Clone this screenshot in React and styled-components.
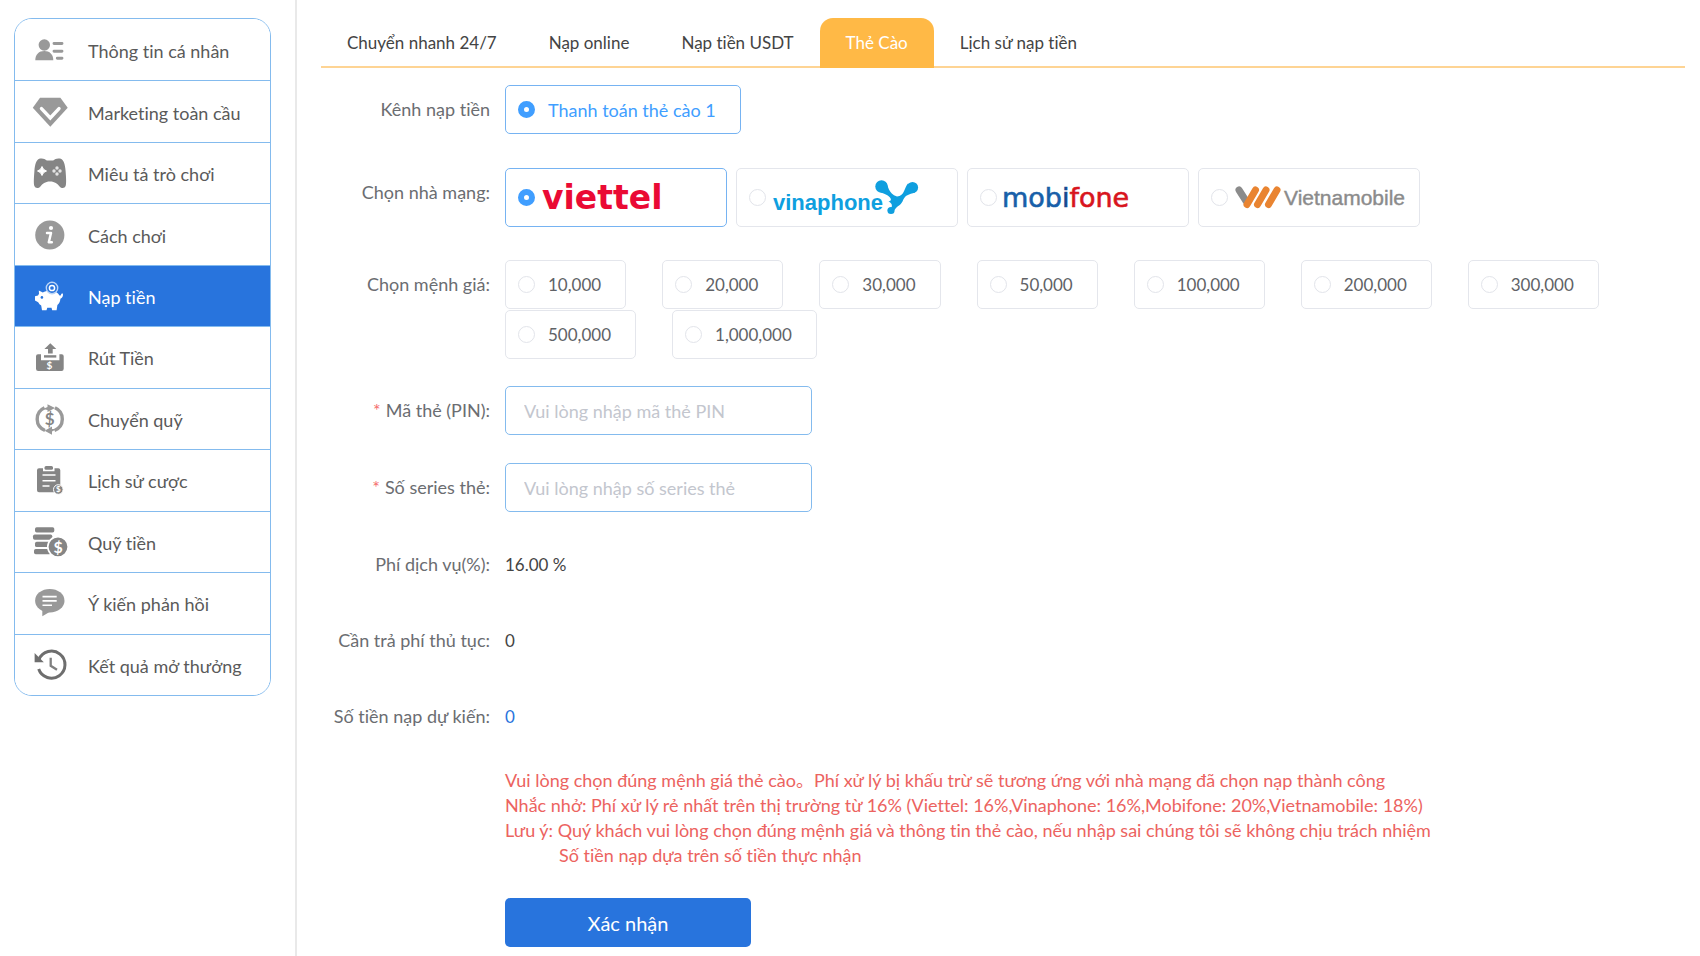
import React, { useState } from "react";
import styled, { createGlobalStyle } from "styled-components";

const GlobalStyle = createGlobalStyle`
  *, *::before, *::after { box-sizing: border-box; }
  body {
    margin: 0;
    background: #fff;
    color: #4b4b4b;
    font-family: Lato, "Noto Sans", "Noto Sans CJK SC", sans-serif;
    font-size: 18px;
    line-height: 24px;
    font-variant-ligatures: none;
  }
  button, input { font: inherit; font-variant-ligatures: none; }
`;

const Page = styled.div`
  display: flex;
  min-height: 100vh;
`;

const Sidebar = styled.aside`
  flex: 0 0 297px;
  padding: 18px 24px 18px 14px;
  border-right: 2px solid #e9e9e9;
`;

const Menu = styled.nav`
  display: grid;
  grid-auto-rows: 1fr;
  min-height: 678px;
  border: 1px solid #84bbee;
  border-radius: 18px;
  overflow: hidden;
`;

const MenuLink = styled.a`
  display: flex;
  align-items: center;
  gap: 20px;
  padding: 0 17px;
  color: ${(p) => (p.$active ? "#fff" : "#5a5a5a")};
  background: ${(p) => (p.$active ? "#2874dd" : "#fff")};
  text-decoration: none;
  white-space: nowrap;

  & + & { border-top: 1px solid #84bbee; }
`;

const MenuIcon = styled.svg`
  flex: none;
  width: 36px;
  height: 36px;
`;

const MenuText = styled.span`
  padding-top: 2px;
`;

const Main = styled.main`
  flex: 1;
  min-width: 0;
  padding: 18px 15px 8px 24px;
`;

const Tabs = styled.div`
  display: flex;
  height: 50px;
  border-bottom: 2px solid #fed494;
`;

const Tab = styled.button`
  height: 50px;
  padding: 0 26px;
  border: 0;
  border-radius: 13px 13px 0 0;
  background: ${(p) => (p.$active ? "#ffb946" : "transparent")};
  color: ${(p) => (p.$active ? "#fff" : "#444")};
  font-size: 17px;
  white-space: nowrap;
  cursor: pointer;
`;

const Form = styled.form`
  display: flex;
  flex-direction: column;
  gap: 27px;
  padding-top: 17px;
`;

const Row = styled.div`
  display: grid;
  grid-template-columns: 169px minmax(0, 1fr);
  column-gap: 15px;
  align-items: start;
  min-height: ${(p) => (p.$static ? 49 : 50)}px;
  margin-bottom: ${(p) => (p.$spaced ? 6 : 0)}px;
`;

const Label = styled.label`
  line-height: 49px;
  color: #6b6d71;
  text-align: right;
  white-space: nowrap;
`;

const Required = styled.span`
  color: #f56c6c;
  margin-right: 5px;
`;

const Options = styled.div`
  display: flex;
  flex-wrap: wrap;
  gap: 1px ${(p) => p.$gap}px;
`;

const Option = styled.label`
  display: flex;
  align-items: center;
  gap: ${(p) => (p.$logo ? 7 : 13)}px;
  width: ${(p) => (p.$logo ? "222px" : "auto")};
  height: ${(p) => (p.$logo ? 59 : 49)}px;
  padding: 0 ${(p) => (p.$logo ? 0 : 24)}px 0 12px;
  border: 1px solid ${(p) => (p.$checked ? "#76b3f2" : "#e4e6ec")};
  border-radius: 5px;
  color: ${(p) => (p.$checked ? "#409eff" : "#606266")};
  font-size: ${(p) => (p.$amount ? 17 : 18)}px;
  white-space: nowrap;
  cursor: pointer;
`;

const Radio = styled.input.attrs({ type: "radio" })`
  appearance: none;
  flex: none;
  width: 17px;
  height: 17px;
  margin: 0;
  border: 1px solid #e2e4ea;
  border-radius: 50%;
  background: #fff;

  &:checked { border: 6px solid #409eff; }
`;

const Logo = styled.svg`
  height: 40px;
  overflow: visible;
`;

const TextInput = styled.input`
  width: 307px;
  height: 49px;
  padding: 0 18px;
  border: 1px solid #84bbee;
  border-radius: 5px;
  background: #fff;
  color: #606266;
  outline: 0;

  &::placeholder { color: #c3c6ce; opacity: 1; }
`;

const Value = styled.output`
  line-height: 49px;
  font-size: 17px;
  color: ${(p) => (p.$accent ? "#2874dd" : "#444")};
`;

const Footer = styled.div`
  display: flex;
  flex-direction: column;
  align-items: flex-start;
  gap: 30px;
  margin-left: 184px;
`;

const Notice = styled.div`
  color: #ec6360;
  line-height: 25px;
`;

const NoticeLine = styled.p`
  margin: 0;
  padding-left: ${(p) => (p.$indent ? 54 : 0)}px;
`;

const Submit = styled.button`
  width: 246px;
  height: 49px;
  border: 0;
  border-radius: 5px;
  background: #2874dd;
  color: #fff;
  font-size: 20px;
  cursor: pointer;
`;

const Dollar = ({ x, y, size, fill }) => (
  <text x={x} y={y} fontSize={size} fill={fill} textAnchor="middle" fontWeight="700" fontFamily="Lato, sans-serif">$</text>
);

const G = "#999";
const D = "#858585";

const icons = {
  profile: (
    <>
      <circle cx="12.3" cy="13" r="5.7" fill={G} />
      <path d="M3.3 28.3c0-6 3.700-9.300 9-9.300s9 3.300 9 9.300z" fill={G} />
      <path d="M22 11.500h8M22 19.300h8M25.300 26.300h4.700" stroke={G} strokeWidth="2.900" strokeLinecap="round" />
    </>
  ),
  marketing: (
    <>
      <path d="M8 3.700h20.400l7.300 10-17.400 19L.8 13.700z" fill={G} />
      <path d="M9.500 14.600l8.800 9.400 8.700-9.400" fill="none" stroke="#fff" strokeWidth="3.400" strokeLinecap="round" />
    </>
  ),
  games: (
    <>
      <path d="M8 3.600c2.500-.6 5 .2 6.800 1.800h6.400C23 3.800 25.500 3 28 3.600c4 1 5 6 5.600 12.400.5 6.500.9 12.500 0 15-.8 2.300-4 2.700-6 .4-2.200-2.600-4.600-5-9.600-5s-7.400 2.400-9.600 5c-2 2.300-5.200 1.900-6-.4-.9-2.500-.5-8.500 0-15C3 9.600 4 4.600 8 3.600z" fill={D} />
      <path d="M10 11.500l1.600 2.900 2.900 1.600-2.900 1.600L10 20.500l-1.600-2.900L5.500 16l2.900-1.600z" fill="#fff" stroke="#fff" strokeLinejoin="round" />
      <g fill="#e4e4e4"><circle cx="25" cy="13" r="1.700" /><circle cx="25" cy="19" r="1.700" /><circle cx="22" cy="16" r="1.700" /><circle cx="28" cy="16" r="1.700" /></g>
    </>
  ),
  info: (
    <>
      <circle cx="17.800" cy="18" r="14.600" fill={G} />
      <circle cx="19" cy="11" r="2.100" fill="#fff" />
      <path d="M15 16h4l-2.200 9.200h3" fill="none" stroke="#fff" strokeWidth="2.500" strokeLinecap="round" strokeLinejoin="round" />
    </>
  ),
  deposit: (
    <>
      <path d="M7 15.800l-.2-3.300 4 2c2-1.200 4.200-1.700 7-1.700 5 0 8.200 1.700 9.700 4.700 1 .5 1.600-.2 1.800-1.700l1.700-.4c.2 2.800-.8 4.600-2.600 5.300-.1 2.500-1.100 4.600-3 6.200l-.8 5.400h-4.400l-.7-2.600h-4.200l-.8 2.600H10l-.8-4.700c-1.300-.9-2.300-2-3-3.400L3 22.600v-4.300l3-.8z" fill="#fff" />
      <circle cx="9.900" cy="19.400" r="1.300" fill="#2874dd" />
      <circle cx="20" cy="10" r="5.700" fill="#2874dd" stroke="#bcd5f6" strokeWidth="1.400" />
      <circle cx="20" cy="10" r="2.600" fill="none" stroke="#fff" strokeWidth="1.500" />
    </>
  ),
  withdraw: (
    <>
      <path d="M6 15.300h3v6h18.400v-6h2.300q2 0 2 2v12.500q0 2.200-2.200 2.200H6.200Q4 32 4 29.800V17.300q0-2 2-2z" fill={D} />
      <path d="M18.300 4.200l6 5.800h-3.600v4.500H16V10h-3.600z" fill={D} />
      <path d="M12 17.400h12.300" stroke={D} strokeWidth="2.400" />
      <Dollar x="17.400" y="30.300" size="10" fill="#fff" />
    </>
  ),
  transfer: (
    <>
      <path d="M12.500 6.800A12.300 12.300 0 0 0 13 29.500M23 6.800A12.300 12.300 0 0 1 22.500 29.500" fill="none" stroke={G} strokeWidth="3.400" />
      <path d="M11 8l4.500-2V3.200L23 7l-7.500 4V9zM24.500 28L20 30.500v3.300l-7.400-4 7.400-4.300V28z" fill={G} />
      <Dollar x="17.800" y="24" size="17" fill={D} />
    </>
  ),
  history: (
    <>
      <path d="M7 6.300h4v3h11.500v-3h3.800q2 0 2 2v15l-6.500 7H7q-2 0-2-2v-20q0-2 2-2z" fill={D} />
      <rect x="12.500" y="4" width="8.500" height="3.700" rx="1.500" fill={D} />
      <path d="M10.500 13h13M10.500 18.700h13M10.500 24h7" stroke="#fff" strokeWidth="1.600" />
      <circle cx="26.300" cy="27.500" r="4.800" fill={D} stroke="#fff" />
      <Dollar x="26.300" y="30.300" size="8" fill="#fff" />
    </>
  ),
  fund: (
    <>
      <g fill={D}>
        <rect x="3" y="3.200" width="19.300" height="5.300" rx="1.700" />
        <rect x="1" y="10.500" width="19.300" height="5.300" rx="1.700" />
        <rect x="3" y="17.800" width="16" height="5.300" rx="1.700" />
        <rect x="2" y="25" width="17" height="5.300" rx="1.700" />
      </g>
      <circle cx="26" cy="22.800" r="10.200" fill={D} stroke="#fff" strokeWidth="1.600" />
      <Dollar x="26.100" y="28.500" size="16" fill="#fff" />
    </>
  ),
  feedback: (
    <>
      <ellipse cx="17.800" cy="15.700" rx="14.700" ry="11.800" fill={G} />
      <path d="M10.300 23v8.200l8.500-5z" fill={G} />
      <path d="M10.500 11.600h14.200M10.500 15.900h14.200M10.500 20.200h9.500" stroke="#fff" strokeWidth="1.600" />
    </>
  ),
  results: (
    <>
      <path d="M7 12.500A13.500 13.500 0 1 1 6.700 22" fill="none" stroke="#6e6e6e" strokeWidth="3" />
      <path d="M2.600 6l9.200 9.300H2.600z" fill="#6e6e6e" />
      <path d="M18.700 10.800v8l6.300 4" fill="none" stroke="#808080" strokeWidth="2.300" />
    </>
  ),
};

const menu = [
  ["profile", "Thông tin cá nhân"],
  ["marketing", "Marketing toàn cầu"],
  ["games", "Miêu tả trò chơi"],
  ["info", "Cách chơi"],
  ["deposit", "Nạp tiền"],
  ["withdraw", "Rút Tiền"],
  ["transfer", "Chuyển quỹ"],
  ["history", "Lịch sử cược"],
  ["fund", "Quỹ tiền"],
  ["feedback", "Ý kiến phản hồi"],
  ["results", "Kết quả mở thưởng"],
];

const tabs = ["Chuyển nhanh 24/7", "Nạp online", "Nạp tiền USDT", "Thẻ Cào", "Lịch sử nạp tiền"];

const carriers = [
  {
    id: "viettel",
    art: (
      <Logo width="121" viewBox="0 0 121 40" role="img" aria-label="viettel">
        <text x="0" y="31" fontFamily="DejaVu Sans, sans-serif" fontWeight="700" fontSize="33" fill="#ea0a34">viettel</text>
      </Logo>
    ),
  },
  {
    id: "vinaphone",
    art: (
      <Logo width="148" viewBox="0 0 148 40" role="img" aria-label="vinaphone">
        <text x="0" y="32" fontFamily="Liberation Sans, sans-serif" fontWeight="700" fontSize="22" fill="#0f9fdf">vinaphone</text>
        <g fill="#0f9fdf">
          <circle cx="108.500" cy="8.500" r="6.200" />
          <circle cx="139.500" cy="9.500" r="5.600" />
          <circle cx="118" cy="32.500" r="3.600" />
          <path d="M112.500 4c3 3 2.500 12 11.500 14.500 8-.5 7-9 11-13l7 9c-6 2-10 2-12.500 9-2 4-5.500 4.500-8 8.500l-3.500-1c2-4 .5-6-2.500-7.500 3-.5 3-2.500 1-4.500-3-3-5-3-9.500-5z" />
        </g>
      </Logo>
    ),
  },
  {
    id: "mobifone",
    art: (
      <Logo width="130" viewBox="0 0 130 40" role="img" aria-label="mobifone">
        <text x="-2" y="29" fontFamily="DejaVu Sans, sans-serif" fontSize="27" fill="#185fa9" stroke="#185fa9" strokeWidth="0.600">
          mob<tspan fill="#17498f" stroke="#17498f">i</tspan><tspan fill="#d8141d" stroke="#d8141d">fone</tspan>
        </text>
      </Logo>
    ),
  },
  {
    id: "vietnamobile",
    art: (
      <Logo width="174" viewBox="0 0 174 40" role="img" aria-label="Vietnamobile">
        <g strokeWidth="7" strokeLinecap="round">
          <path d="M4 12l7 11" stroke="#8b8b8b" />
          <path d="M20.500 12l-8.500 14.500M31 12l-8.500 14.500M42 12l-8.500 14.500" stroke="#e98431" />
        </g>
        <text x="49" y="27" fontFamily="Liberation Sans, sans-serif" fontSize="21" fill="#8b8b8b" stroke="#8b8b8b" strokeWidth="0.400">Vietnamobile</text>
      </Logo>
    ),
  },
];

const amounts = ["10,000", "20,000", "30,000", "50,000", "100,000", "200,000", "300,000", "500,000", "1,000,000"];

export default function App() {
  const [carrier, setCarrier] = useState("viettel");
  const [amount, setAmount] = useState(null);

  return (
    <>
      <GlobalStyle />
      <Page>
        <Sidebar>
          <Menu>
            {menu.map(([id, text]) => (
              <MenuLink key={id} href={`#${id}`} $active={id === "deposit"}>
                <MenuIcon viewBox="0 0 36 36" aria-hidden="true">{icons[id]}</MenuIcon>
                <MenuText>{text}</MenuText>
              </MenuLink>
            ))}
          </Menu>
        </Sidebar>
        <Main>
          <Tabs role="tablist">
            {tabs.map((text) => (
              <Tab key={text} type="button" role="tab" aria-selected={text === "Thẻ Cào"} $active={text === "Thẻ Cào"}>
                {text}
              </Tab>
            ))}
          </Tabs>
          <Form onSubmit={(e) => e.preventDefault()}>
            <Row $spaced role="radiogroup" aria-labelledby="channel-label">
              <Label as="span" id="channel-label">Kênh nạp tiền</Label>
              <Options $gap={36}>
                <Option $checked>
                  <Radio name="channel" defaultChecked />
                  Thanh toán thẻ cào 1
                </Option>
              </Options>
            </Row>
            <Row $spaced role="radiogroup" aria-labelledby="carrier-label">
              <Label as="span" id="carrier-label">Chọn nhà mạng:</Label>
              <Options $gap={9}>
                {carriers.map((c) => (
                  <Option key={c.id} $logo $checked={c.id === carrier}>
                    <Radio name="carrier" checked={c.id === carrier} onChange={() => setCarrier(c.id)} />
                    {c.art}
                  </Option>
                ))}
              </Options>
            </Row>
            <Row role="radiogroup" aria-labelledby="amount-label">
              <Label as="span" id="amount-label">Chọn mệnh giá:</Label>
              <Options $gap={36}>
                {amounts.map((a) => (
                  <Option key={a} $amount $checked={a === amount}>
                    <Radio name="amount" checked={a === amount} onChange={() => setAmount(a)} />
                    {a}
                  </Option>
                ))}
              </Options>
            </Row>
            <Row>
              <Label htmlFor="pin"><Required>*</Required>Mã thẻ (PIN):</Label>
              <TextInput id="pin" placeholder="Vui lòng nhập mã thẻ PIN" />
            </Row>
            <Row>
              <Label htmlFor="series"><Required>*</Required>Số series thẻ:</Label>
              <TextInput id="series" placeholder="Vui lòng nhập số series thẻ" />
            </Row>
            <Row $static>
              <Label htmlFor="rate">Phí dịch vụ(%):</Label>
              <Value id="rate">16.00 %</Value>
            </Row>
            <Row $static>
              <Label htmlFor="fee">Cần trả phí thủ tục:</Label>
              <Value id="fee">0</Value>
            </Row>
            <Row $static>
              <Label htmlFor="expected">Số tiền nạp dự kiến:</Label>
              <Value id="expected" $accent>0</Value>
            </Row>
            <Footer>
              <Notice>
                <NoticeLine>Vui lòng chọn đúng mệnh giá thẻ cào。Phí xử lý bị khấu trừ sẽ tương ứng với nhà mạng đã chọn nạp thành công</NoticeLine>
                <NoticeLine>Nhắc nhở: Phí xử lý rẻ nhất trên thị trường từ 16% (Viettel: 16%,Vinaphone: 16%,Mobifone: 20%,Vietnamobile: 18%)</NoticeLine>
                <NoticeLine>Lưu ý: Quý khách vui lòng chọn đúng mệnh giá và thông tin thẻ cào, nếu nhập sai chúng tôi sẽ không chịu trách nhiệm</NoticeLine>
                <NoticeLine $indent>Số tiền nạp dựa trên số tiền thực nhận</NoticeLine>
              </Notice>
              <Submit type="submit">Xác nhận</Submit>
            </Footer>
          </Form>
        </Main>
      </Page>
    </>
  );
}
